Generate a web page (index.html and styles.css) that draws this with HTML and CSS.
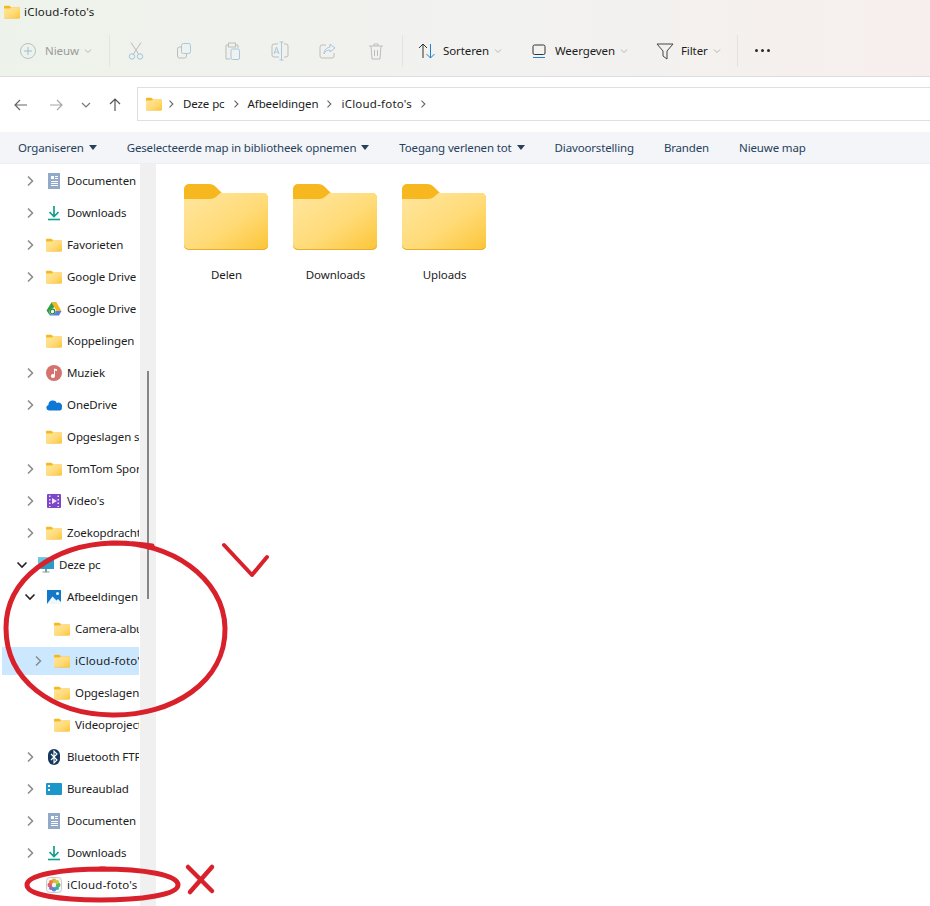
FILE: index.html
```html
<!DOCTYPE html>
<html lang="nl">
<head>
<meta charset="utf-8">
<title>iCloud-foto's</title>
<link rel="stylesheet" href="styles.css">
</head>
<body>
<svg class="defs" width="0" height="0" aria-hidden="true">
  <defs>
    <linearGradient id="fg" x1="0" y1="0" x2="1" y2="1">
      <stop offset="0" stop-color="#ffe6a0"/>
      <stop offset="0.55" stop-color="#ffdb78"/>
      <stop offset="1" stop-color="#fcc537"/>
    </linearGradient>
    <symbol id="folder" viewBox="0 0 84 66">
      <path d="M0 5a5 5 0 0 1 5-5h20c3 0 5 1 7 3l6 6h41a5 5 0 0 1 5 5v47a5 5 0 0 1-5 5H5a5 5 0 0 1-5-5z" fill="#f7b81f"/>
      <path d="M0 15h26c3 0 5-1 7-3l3.500-3H79a5 5 0 0 1 5 5v47a5 5 0 0 1-5 5H5a5 5 0 0 1-5-5z" fill="url(#fg)"/>
      <path d="M0 61v-1a5 5 0 0 0 5 5h74a5 5 0 0 0 5-5v1a5 5 0 0 1-5 5H5a5 5 0 0 1-5-5z" fill="#e9ac2d"/>
    </symbol>
    <symbol id="chev" viewBox="0 0 16 16"><path d="M6 3.500 10.500 8 6 12.500" fill="none" stroke="currentColor" stroke-width="1.500"/></symbol>
    <symbol id="chevd" viewBox="0 0 16 16"><path d="M3.500 5.500 8 10l4.500-4.500" fill="none" stroke="currentColor" stroke-width="1.600"/></symbol>
    <symbol id="mini" viewBox="0 0 8 6"><path d="M1 1.500 4 4.500l3-3" fill="none" stroke="#b4b4b4" stroke-width="1"/></symbol>
    <symbol id="docs" viewBox="0 0 16 16"><path d="M2 0h12v16H2z" fill="#9db4d0"/><path d="M2 0h12v16H2z" fill="#7f9cbf" opacity=".4"/><path d="M5 3h3v3H5zM9 3h3v1H9zM9 5h3v1H9zM5 8h7v1H5zM5 10h7v1H5zM5 12h7v1H5z" fill="#fff"/></symbol>
    <symbol id="down" viewBox="0 0 16 16"><path d="M8 1v9.500M3.500 7 8 11.500 12.500 7" fill="none" stroke="#12a08c" stroke-width="1.700"/><path d="M2 14.500h12" stroke="#12a08c" stroke-width="1.600"/></symbol>
  </defs>
</svg>

<div class="window">
  <header class="head">
    <div class="title">
      <svg class="ico16"><use href="#folder"/></svg>
      <span class="wide">iCloud-foto's</span>
    </div>
    <div class="tools">
      <div class="tool new dim">
        <svg class="ico20" viewBox="0 0 20 20"><circle cx="10" cy="10" r="7.500" fill="none" stroke="#b8c0c8"/><path d="M10 6v8M6 10h8" stroke="#9cbbd6"/></svg>
        <span>Nieuw</span>
        <svg class="mini"><use href="#mini"/></svg>
      </div>
      <i class="sep s1"></i>
      <div class="actions">
        <svg class="ico20" viewBox="0 0 20 20"><g fill="none"><path d="M5 1.500l7.500 11.500M15 1.500 7.500 13" stroke="#b9b9b9"/><circle cx="6" cy="15.500" r="2.700" stroke="#9fc3e2"/><circle cx="14" cy="15.500" r="2.700" stroke="#9fc3e2"/></g></svg>
        <svg class="ico20" viewBox="0 0 20 20"><g fill="none"><rect x="7.500" y="2.500" width="9" height="10" rx="2" stroke="#a6c6e2"/><path d="M7.500 6H5.500a2 2 0 0 0-2 2v7a2 2 0 0 0 2 2h5a2 2 0 0 0 2-2v-2" stroke="#bdbdbd"/></g></svg>
        <svg class="ico20" viewBox="0 0 20 20"><g fill="none"><path d="M6 4H4v14h4M14 4h2v3" stroke="#bdbdbd"/><rect x="6.500" y="2" width="7" height="4" stroke="#bdbdbd"/><rect x="9" y="8" width="8.500" height="10.500" rx="1.500" stroke="#a6c6e2"/></g></svg>
        <svg class="ico20" viewBox="0 0 20 20"><g fill="none"><path d="M8 3H4a2 2 0 0 0-2 2v9a2 2 0 0 0 2 2h5M14 3h2a2 2 0 0 1 2 2v9a2 2 0 0 1-2 2h-2" stroke="#bdbdbd"/><path d="M11.500 1v18M9.500 1h4M9.500 19h4" stroke="#a6c6e2"/><path d="M4 13l2.500-7L9 13M5 11h3" stroke="#a6c6e2"/></g></svg>
        <svg class="ico20" viewBox="0 0 20 20"><g fill="none"><path d="M8 4H4a2 2 0 0 0-2 2v9a2 2 0 0 0 2 2h10a2 2 0 0 0 2-2v-3" stroke="#bdbdbd"/><path d="M12 3l5 4-5 4V9c-3 0-5 1-6 4 0-4 2-6 6-7z" stroke="#a6c6e2"/></g></svg>
        <svg class="ico20" viewBox="0 0 20 20"><g fill="none" stroke="#bdbdbd"><path d="M3 5h14M8 5V3h4v2M5 5l1 13h8l1-13M8.500 9v6M11.500 9v6"/></g></svg>
      </div>
      <i class="sep s2"></i>
      <div class="tool sort">
        <svg class="ico20" viewBox="0 0 20 20"><path d="M6 17V3M2 7l4-4 4 4" fill="none" stroke="#333"/><path d="M13.500 3v14M9.500 13l4 4 4-4" fill="none" stroke="#1f7fd0"/></svg>
        <span>Sorteren</span>
        <svg class="mini"><use href="#mini"/></svg>
      </div>
      <div class="tool view">
        <svg class="ico20" viewBox="0 0 20 20"><rect x="4" y="4" width="12" height="9.500" rx="1.500" fill="none" stroke="#333"/><path d="M4 16.500h12" stroke="#1f7fd0"/></svg>
        <span>Weergeven</span>
        <svg class="mini"><use href="#mini"/></svg>
      </div>
      <div class="tool filter">
        <svg class="ico20" viewBox="0 0 20 20"><path d="M2 3h16l-6 7v8l-4-3v-5z" fill="none" stroke="#444"/></svg>
        <span>Filter</span>
        <svg class="mini"><use href="#mini"/></svg>
      </div>
      <i class="sep s3"></i>
      <div class="more"><b></b><b></b><b></b></div>
    </div>
  </header>

  <nav class="addr">
    <svg class="nav-a" viewBox="0 0 16 16"><path d="M14 8H2M7 3 2 8l5 5" fill="none" stroke="#666" stroke-width="1.200"/></svg>
    <svg class="nav-b" viewBox="0 0 16 16"><path d="M2 8h12M9 3l5 5-5 5" fill="none" stroke="#a6a6a6" stroke-width="1.200"/></svg>
    <svg class="nav-c" viewBox="0 0 16 16"><path d="M4 6l4 4 4-4" fill="none" stroke="#777" stroke-width="1.200"/></svg>
    <svg class="nav-d" viewBox="0 0 16 16"><path d="M8 14V2M3 7l5-5 5 5" fill="none" stroke="#555" stroke-width="1.200"/></svg>
    <div class="crumbs">
      <svg class="ico16"><use href="#folder"/></svg>
      <svg class="cv"><use href="#chev"/></svg>
      <span>Deze pc</span>
      <svg class="cv"><use href="#chev"/></svg>
      <span>Afbeeldingen</span>
      <svg class="cv"><use href="#chev"/></svg>
      <span class="wide">iCloud-foto's</span>
      <svg class="cv"><use href="#chev"/></svg>
    </div>
  </nav>

  <div class="menu">
    <span class="m caret">Organiseren</span>
    <span class="m caret">Geselecteerde map in bibliotheek opnemen</span>
    <span class="m caret">Toegang verlenen tot</span>
    <span class="m">Diavoorstelling</span>
    <span class="m">Branden</span>
    <span class="m">Nieuwe map</span>
  </div>

  <div class="body">
    <aside class="side">
      <ul class="tree">
        <li class="row l1"><svg class="tw"><use href="#chev"/></svg><svg class="ico16"><use href="#docs"/></svg><span>Documenten</span></li>
        <li class="row l1"><svg class="tw"><use href="#chev"/></svg><svg class="ico16"><use href="#down"/></svg><span>Downloads</span></li>
        <li class="row l1"><svg class="tw"><use href="#chev"/></svg><svg class="ico16"><use href="#folder"/></svg><span>Favorieten</span></li>
        <li class="row l1"><svg class="tw"><use href="#chev"/></svg><svg class="ico16"><use href="#folder"/></svg><span>Google Drive</span></li>
        <li class="row l1"><i class="tw"></i><svg class="ico16" viewBox="0 0 16 16"><path d="M5.500 1.500h5L8 6 5.800 9.800 3.500 14 .5 9.500z" fill="#2f9e44"/><path d="M5.500 1.500h5l5 8.500h-5z" fill="#f6b61e"/><path d="M5.500 10h10l-2.500 4.500H3.500z" fill="#5a7de0"/><circle cx="6.500" cy="10.500" r="3" fill="#fff"/><circle cx="6.500" cy="10.500" r="2.300" fill="none" stroke="#1f8a3b" stroke-width="1.200"/></svg><span>Google Drive</span></li>
        <li class="row l1"><i class="tw"></i><svg class="ico16"><use href="#folder"/></svg><span>Koppelingen</span></li>
        <li class="row l1"><svg class="tw"><use href="#chev"/></svg><svg class="ico16" viewBox="0 0 16 16"><circle cx="8" cy="8" r="8" fill="#d4736e"/><path d="M8 3.500l3 .8v1.700l-2-.6V11a2 2 0 1 1-1-1.700z" fill="#fff"/></svg><span>Muziek</span></li>
        <li class="row l1"><svg class="tw"><use href="#chev"/></svg><svg class="ico16" viewBox="0 0 16 16"><path d="M3 13.500a2.800 2.800 0 0 1-.6-5.500 4.500 4.500 0 0 1 8.500-2.100A3.800 3.800 0 0 1 15.800 11c.3 1.500-.8 2.500-2 2.500z" fill="#0f78d4"/></svg><span>OneDrive</span></li>
        <li class="row l1"><i class="tw"></i><svg class="ico16"><use href="#folder"/></svg><span>Opgeslagen spellen</span></li>
        <li class="row l1"><svg class="tw"><use href="#chev"/></svg><svg class="ico16"><use href="#folder"/></svg><span>TomTom Sport</span></li>
        <li class="row l1"><svg class="tw"><use href="#chev"/></svg><svg class="ico16" viewBox="0 0 16 16"><rect x="1" y="1" width="14" height="14" rx="1" fill="#7d45c9"/><path d="M3 2.500h1.500V4H3zM3 6h1.500v1.500H3zM3 9.500h1.500V11H3zM3 13h1.500v1H3zM11.500 2.500H13V4h-1.500zM11.500 6H13v1.500h-1.500zM11.500 9.500H13V11h-1.500zM11.500 13H13v1h-1.500zM6 5l5 3-5 3z" fill="#efe6fb"/></svg><span>Video's</span></li>
        <li class="row l1"><svg class="tw"><use href="#chev"/></svg><svg class="ico16"><use href="#folder"/></svg><span>Zoekopdrachten</span></li>
        <li class="row l0 dark"><svg class="tw"><use href="#chevd"/></svg><svg class="ico16" viewBox="0 0 16 16"><rect x="0" y="0.500" width="16" height="11.500" fill="#2a9cc4"/><path d="M0 .5h9L3 12H0z" fill="#63c8e0"/><path d="M7 12h2v2.500H7zM4.500 14.500h7v1h-7z" fill="#7f97a8"/></svg><span>Deze pc</span></li>
        <li class="row l1 dark"><svg class="tw"><use href="#chevd"/></svg><svg class="ico16" viewBox="0 0 16 16"><rect x="1" y="1" width="14" height="14" fill="#1478c8"/><path d="M1 15 6.500 7.500l4 4 1.500-1.500 3 3v2z" fill="#eef7fd"/><circle cx="11.500" cy="4.500" r="1.500" fill="#eef7fd"/></svg><span>Afbeeldingen</span></li>
        <li class="row l2"><i class="tw"></i><svg class="ico16"><use href="#folder"/></svg><span>Camera-album</span></li>
        <li class="row l2 sel"><svg class="tw"><use href="#chev"/></svg><svg class="ico16"><use href="#folder"/></svg><span class="wide">iCloud-foto's</span></li>
        <li class="row l2"><i class="tw"></i><svg class="ico16"><use href="#folder"/></svg><span>Opgeslagen afbeeldingen</span></li>
        <li class="row l2"><i class="tw"></i><svg class="ico16"><use href="#folder"/></svg><span>Videoprojecten</span></li>
        <li class="row l1"><svg class="tw"><use href="#chev"/></svg><svg class="ico16" viewBox="0 0 16 16"><rect x="2" y="0" width="12" height="16" rx="6" fill="#14365f"/><path d="M5 5l6 6-3 3V2l3 3-6 6" fill="none" stroke="#fff" stroke-width="1.100"/></svg><span>Bluetooth FTP</span></li>
        <li class="row l1"><svg class="tw"><use href="#chev"/></svg><svg class="ico16" viewBox="0 0 16 16"><rect x="0" y="2" width="16" height="12" rx="1" fill="#1b98c9"/><path d="M2 4h2v2H2zM2 8h2v2H2z" fill="#fff"/></svg><span>Bureaublad</span></li>
        <li class="row l1"><svg class="tw"><use href="#chev"/></svg><svg class="ico16"><use href="#docs"/></svg><span>Documenten</span></li>
        <li class="row l1"><svg class="tw"><use href="#chev"/></svg><svg class="ico16"><use href="#down"/></svg><span>Downloads</span></li>
        <li class="row l1"><i class="tw"></i><svg class="ico16" viewBox="0 0 16 16"><rect x="0.500" y="0.500" width="15" height="15" rx="3" fill="#f4f4f4" stroke="#ccc"/><circle cx="8" cy="3.800" r="2.300" fill="#eab13a"/><circle cx="12.200" cy="8" r="2.300" fill="#5cb85c"/><circle cx="8" cy="12.200" r="2.300" fill="#4b8fd8"/><circle cx="3.800" cy="8" r="2.300" fill="#e0605a"/><circle cx="11" cy="5" r="2" fill="#c9c93a"/><circle cx="5" cy="11" r="2" fill="#a262c0"/><circle cx="5" cy="5" r="2" fill="#ec7a3c"/><circle cx="11" cy="11" r="2" fill="#3ab0a8"/><circle cx="8" cy="8" r="1.500" fill="#f7f2f2"/></svg><span class="wide">iCloud-foto's</span></li>
      </ul>
      <div class="track"><div class="thumb"></div></div>
    </aside>

    <main class="main">
      <div class="item"><svg class="big"><use href="#folder"/></svg><span>Delen</span></div>
      <div class="item"><svg class="big"><use href="#folder"/></svg><span>Downloads</span></div>
      <div class="item"><svg class="big"><use href="#folder"/></svg><span>Uploads</span></div>
    </main>
  </div>

  <svg class="marks" viewBox="0 0 930 906" aria-hidden="true">
    <g fill="none" stroke="#d9212c" stroke-linecap="round" stroke-linejoin="round">
      <path stroke-width="5" d="M112 543C170 541 224 578 225 628C226 682 172 716 112 715C52 714 6 680 6 628C6 578 55 545 112 543C125 543 140 544 152 546"/>
      <path stroke-width="4" d="M224 545 252 575 267 557"/>
      <path stroke-width="5" d="M100 869C145 869 178 875 178 885C178 895 140 900 100 900C60 900 27 895 27 885C27 875 60 869 105 869"/>
      <path stroke-width="4.500" d="M188 867 212 891M212 867 190 892"/>
    </g>
  </svg>
</div>
</body>
</html>
```

FILE: styles.css
```css
* { box-sizing: border-box; }
html, body { margin: 0; padding: 0; height: 100%; overflow: hidden; background: #fff; }
body { font: 11.5px/16px "Noto Sans", "Open Sans", sans-serif; letter-spacing: -0.1px; color: #1c1c1c; }
.defs { position: absolute; }
.window { position: relative; width: 930px; height: 906px; overflow: hidden; display: flex; flex-direction: column; }
svg { display: block; flex: none; }
.ico16 { width: 16px; height: 16px; }
.ico20 { width: 20px; height: 20px; }
.wide { letter-spacing: 0.22px; }

/* header */
.head { height: 77px; flex: none; border-bottom: 1px solid #dedede;
  background: linear-gradient(90deg, #edf3ea 0%, #f0f2ed 25%, #f2f2f0 55%, #f3f1ef 70%, #f7efed 100%); }
.title { height: 24px; display: flex; align-items: center; gap: 4px; padding-left: 4px; }
.tools { height: 52px; display: flex; align-items: center; padding-top: 1px; }
.tool { display: flex; align-items: center; flex: none; }
.tool .mini { width: 8px; height: 6px; margin-left: 5px; }
.dim { color: #9a9a9a; }
.new { margin-left: 18px; width: 91px; }
.new span { margin-left: 7px; }
.sep { display: block; width: 1px; height: 32px; background: #e3e3e1; flex: none; }
.actions { display: flex; gap: 28px; margin-left: 16px; }
.s2 { margin-left: 16px; }
.sort { margin-left: 14px; width: 112px; }
.sort span, .view span, .filter span { margin-left: 6px; }
.view { width: 126px; }
.filter { width: 82px; }
.more { display: flex; gap: 3px; margin-left: 17px; }
.more b { display: block; width: 3px; height: 3px; background: #2a2a2a; border-radius: 50%; }

/* address */
.addr { height: 55px; flex: none; display: flex; align-items: center; }
.addr > svg { width: 16px; height: 16px; }
.nav-a { margin-left: 13px; }
.nav-b { margin-left: 19px; }
.nav-c { margin-left: 14px; }
.nav-d { margin-left: 13px; }
.crumbs { margin: 0 0 1px 14px; flex: 1; height: 34px; border: 1px solid #dfdfdf; border-right: 0; display: flex; align-items: center; padding-left: 8px; }
.cv { width: 12px; height: 12px; color: #666; margin: 0 6px 0 5px; }
.crumbs .ico16 + .cv { margin-left: 3px; }

/* menu */
.menu { height: 32px; flex: none; background: #f3f5f8; border-bottom: 1px solid #edeef0; display: flex; align-items: center; color: #27415c; padding-left: 18px; gap: 30px; letter-spacing: -0.15px; }
.m.caret::after { content: ""; display: inline-block; margin-left: 5px; vertical-align: 2px; border: 4px solid transparent; border-bottom: 0; border-top: 5px solid #27415c; }

/* body */
.body { flex: 1; display: flex; min-height: 0; }
.side { width: 156px; flex: none; display: flex; }
.tree { list-style: none; margin: 0; padding: 1px 0 0; width: 140px; flex: none; overflow: hidden; display: flex; flex-direction: column; gap: 2px; }
.row { height: 28px; flex: none; margin: 2px 1px 0 2px; display: flex; align-items: center; white-space: nowrap; overflow: hidden; color: #1c1c1c; }
.row .tw { width: 16px; height: 16px; color: #8a8a8a; margin-right: 8px; display: block; flex: none; }
.row .ico16 { margin-right: 5px; }
.dark .tw { color: #222; }
.l0 { padding-left: 12px; }
.l1 { padding-left: 20px; }
.l2 { padding-left: 28px; }
.sel { background: #cce8ff; }
.track { width: 16px; flex: none; background: #f0f0f0; display: flex; justify-content: center; }
.thumb { width: 2px; height: 228px; margin-top: 207px; background: #858585; }
.main { flex: 1; display: flex; align-items: flex-start; padding: 20px 0 0 16px; }
.item { width: 109px; flex: none; display: flex; flex-direction: column; align-items: center; }
.big { width: 84px; height: 66px; margin-left: -1px; }
.item span { margin-top: 17px; }

.marks { position: absolute; left: 0; top: 0; width: 930px; height: 906px; pointer-events: none; }
```
